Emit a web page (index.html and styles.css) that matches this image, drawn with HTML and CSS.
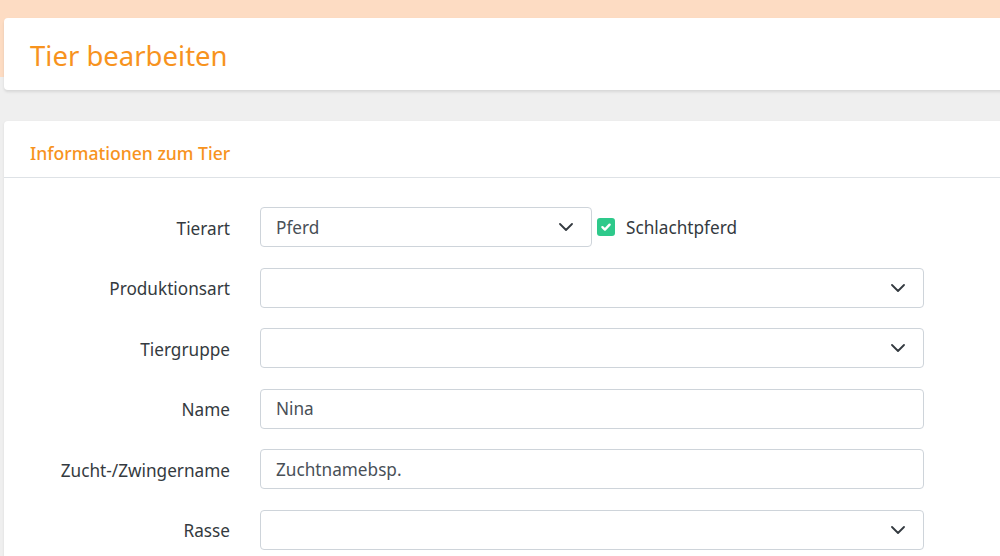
FILE: index.html
```html
<!DOCTYPE html>
<html lang="de">
<head>
<meta charset="utf-8">
<title>Tier bearbeiten</title>
<link rel="stylesheet" href="styles.css">
</head>
<body>
<div class="band"></div>
<div class="page">
  <div class="card title-card">
    <h1 class="title">Tier bearbeiten</h1>
  </div>
  <div class="card form-card">
    <div class="card-header">Informationen zum Tier</div>
    <div class="card-body">
      <div class="row">
        <label class="lbl">Tierart</label>
        <div class="field split">
          <div class="control select half"><span class="val">Pferd</span><svg class="chev" viewBox="0 0 14 8"><path d="M1 1l6 6 6-6"/></svg></div>
          <div class="check"><span class="box"><svg viewBox="0 0 12 12"><path d="M2.4 6.2l2.5 2.4 4.7-4.9"/></svg></span><span class="check-lbl">Schlachtpferd</span></div>
        </div>
      </div>
      <div class="row">
        <label class="lbl">Produktionsart</label>
        <div class="field"><div class="control select"><span class="val"></span><svg class="chev" viewBox="0 0 14 8"><path d="M1 1l6 6 6-6"/></svg></div></div>
      </div>
      <div class="row">
        <label class="lbl">Tiergruppe</label>
        <div class="field"><div class="control select"><span class="val"></span><svg class="chev" viewBox="0 0 14 8"><path d="M1 1l6 6 6-6"/></svg></div></div>
      </div>
      <div class="row">
        <label class="lbl">Name</label>
        <div class="field"><div class="control"><span class="val">Nina</span></div></div>
      </div>
      <div class="row">
        <label class="lbl">Zucht-/Zwingername</label>
        <div class="field"><div class="control"><span class="val">Zuchtnamebsp.</span></div></div>
      </div>
      <div class="row">
        <label class="lbl">Rasse</label>
        <div class="field"><div class="control select"><span class="val"></span><svg class="chev" viewBox="0 0 14 8"><path d="M1 1l6 6 6-6"/></svg></div></div>
      </div>
    </div>
  </div>
</div>
</body>
</html>
```
FILE: styles.css
```css
html, body {
  margin: 0;
  padding: 0;
}
body {
  background: #efefef;
  font-family: "Noto Sans", "Open Sans", sans-serif;
  color: #343a40;
  overflow: hidden;
  position: relative;
  width: 1000px;
  height: 556px;
}
.band {
  position: absolute;
  left: 0;
  top: 0;
  width: 100%;
  height: 77px;
  background: #fddcc3;
}
.page {
  position: relative;
  padding: 18px 0 0 4px;
  width: 1010px;
}
.card {
  background: #fff;
  border-radius: 4px;
  box-shadow: 0 1px 3px rgba(0,0,0,0.08);
}
.title-card {
  height: 72px;
  display: flex;
  align-items: center;
  padding-left: 26px;
  box-sizing: border-box;
  box-shadow: 0 2px 3px rgba(0,0,0,0.1);
}
.title {
  margin: 0;
  font-weight: 400;
  font-size: 27.5px;
  color: #f7931e;
  letter-spacing: 0;
  position: relative;
  top: 1px;
}
.form-card {
  margin-top: 31px;
}
.card-header {
  height: 57px;
  box-sizing: border-box;
  border-bottom: 1px solid #dee2e6;
  padding-left: 26px;
  padding-top: 7px;
  display: flex;
  align-items: center;
  font-size: 17.6px;
  font-weight: 500;
  color: #f7931e;
}
.card-body {
  padding-top: 29px;
  padding-bottom: 40px;
}
.row {
  display: grid;
  grid-template-columns: 226px 664px;
  column-gap: 30px;
  align-items: center;
  margin-bottom: 20.6px;
}
.lbl {
  text-align: right;
  font-size: 17.2px;
  color: #343a40;
  position: relative;
  top: 1px;
}
.field.split {
  display: flex;
  align-items: center;
}
.control {
  height: 40px;
  box-sizing: border-box;
  border: 1px solid #ced4da;
  border-radius: 4px;
  display: flex;
  align-items: center;
  padding: 0 18px 0 15px;
  font-size: 17.2px;
  color: #495057;
  background: #fff;
}
.control .val {
  flex: 1;
}
.half {
  width: 332px;
}
.chev {
  width: 14px;
  height: 8px;
  fill: none;
  stroke: #343a40;
  stroke-width: 1.8;
  stroke-linecap: round;
  stroke-linejoin: round;
}
.check {
  display: flex;
  align-items: center;
  margin-left: 5px;
}
.box {
  width: 18px;
  height: 18px;
  border-radius: 3px;
  background: #2ec98b;
  display: flex;
  align-items: center;
  justify-content: center;
}
.box svg {
  width: 12px;
  height: 12px;
  fill: none;
  stroke: #fff;
  stroke-width: 2.4;
  stroke-linecap: round;
  stroke-linejoin: round;
}
.check-lbl {
  margin-left: 11px;
  font-size: 17.2px;
  color: #343a40;
}
```
